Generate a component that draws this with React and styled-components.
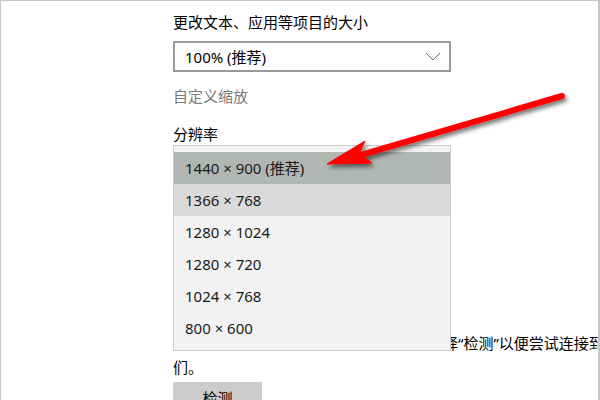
import React from "react"
import styled, { createGlobalStyle } from "styled-components"

const GlobalStyle = createGlobalStyle`
  *, ::after, ::before {
    box-sizing: border-box;
  }
  body {
    margin: 0;
    background: #fff;
    font-family: "Noto Sans", "Noto Sans CJK SC", sans-serif;
  }
`

const Frame = styled.main`
  position: relative;
  width: 600px;
  height: 400px;
  overflow: hidden;
  background: #fff;
  border-top: 1px solid #c6c6c6;
  border-left: 1px solid #c6c6c6;
  border-right: 2px solid #c6c6c6;
`

const Column = styled.section`
  display: flex;
  flex-direction: column;
  align-items: flex-start;
  padding: 11px 0 0 172px;
  font-size: 15px;
  line-height: 20px;
  color: #000;
`

const Label = styled.div`
  margin-top: ${p => p.$gap || 0}px;
  color: ${p => (p.$muted ? "#7a7a7a" : "#000")};
  white-space: nowrap;
`

const SelectBox = styled.div`
  display: flex;
  align-items: center;
  justify-content: space-between;
  width: 278px;
  height: 31px;
  margin-top: ${p => p.$gap || 0}px;
  padding: 0 8px 0 10px;
  border: 2px solid #999;
  background: #fff;
  color: #000;
`

const Chevron = () => (
  <svg width="16" height="9" viewBox="0 0 16 9">
    <polyline points="1,1 8,8 15,1" fill="none" stroke="#666" strokeWidth="1" />
  </svg>
)

const Select = ({ value, gap }) => (
  <SelectBox $gap={gap}>
    <span>{value}</span>
    <Chevron />
  </SelectBox>
)

const Field = styled.div`
  position: relative;
  display: flex;
  flex-direction: column;
  align-items: flex-start;
  margin-top: 1px;
`

const SectionTitle = styled.h2`
  margin: 28px 0 0;
  font-size: 20px;
  line-height: 28px;
  font-weight: normal;
`

const Paragraph = styled.p`
  margin: 21px 0 0;
  line-height: 24px;
  span {
    display: block;
    white-space: nowrap;
  }
`

const Popup = styled.ul`
  position: absolute;
  z-index: 2;
  top: 0;
  left: 0;
  width: 278px;
  height: 206px;
  margin: 0;
  padding: 6px 0;
  list-style: none;
  background: #f2f2f2;
  border: 1px solid #cfcfcf;
`

const Option = styled.li`
  height: 32px;
  padding-left: 11px;
  display: flex;
  align-items: center;
  color: #1a1a1a;
  background: ${p => (p.$selected ? "#b2b6b2" : p.$hover ? "#dadada" : "transparent")};
`

const Button = styled.button`
  margin-top: 3px;
  width: 89px;
  height: 32px;
  border: none;
  background: #cccccc;
  font: inherit;
  color: #000;
`

const Overlay = styled.svg`
  position: absolute;
  z-index: 3;
  left: 0;
  top: 0;
  pointer-events: none;
`

const Arrow = () => (
  <Overlay width="600" height="400" viewBox="0 0 600 400">
    <defs>
      <filter id="shadow" x="-20%" y="-20%" width="140%" height="160%">
        <feDropShadow dx="2" dy="3" stdDeviation="2" floodColor="#000" floodOpacity="0.55" />
      </filter>
    </defs>
    <g filter="url(#shadow)" fill="#f00" stroke="#f00">
      <line x1="561" y1="95" x2="360" y2="154" strokeWidth="6" strokeLinecap="round" />
      <polygon points="326,163 364,140 358,153 371,162" strokeWidth="1" strokeLinejoin="round" />
    </g>
  </Overlay>
)

const resolutions = [
  "1440 × 900 (推荐)",
  "1366 × 768",
  "1280 × 1024",
  "1280 × 720",
  "1024 × 768",
  "800 × 600",
]

const App = () => (
  <Frame>
    <GlobalStyle />
    <Column>
      <Label>更改文本、应用等项目的大小</Label>
      <Select value="100% (推荐)" gap={9} />
      <Label $muted $gap={14}>自定义缩放</Label>
      <Label $gap={18}>分辨率</Label>
      <Field>
        <Select value="1440 × 900 (推荐)" />
        <Label $gap={18}>方向</Label>
        <Select value="横向" gap={9} />
        <SectionTitle>多显示器</SectionTitle>
        <Paragraph>
          <span>较旧的显示器可能不会总是自动连接。选择“检测”以便尝试连接到它</span>
          <span>们。</span>
        </Paragraph>
        <Popup>
          {resolutions.map((r, i) => (
            <Option key={r} $selected={i === 0} $hover={i === 1}>
              {r}
            </Option>
          ))}
        </Popup>
      </Field>
      <Button>检测</Button>
    </Column>
    <Arrow />
  </Frame>
)

export default App
